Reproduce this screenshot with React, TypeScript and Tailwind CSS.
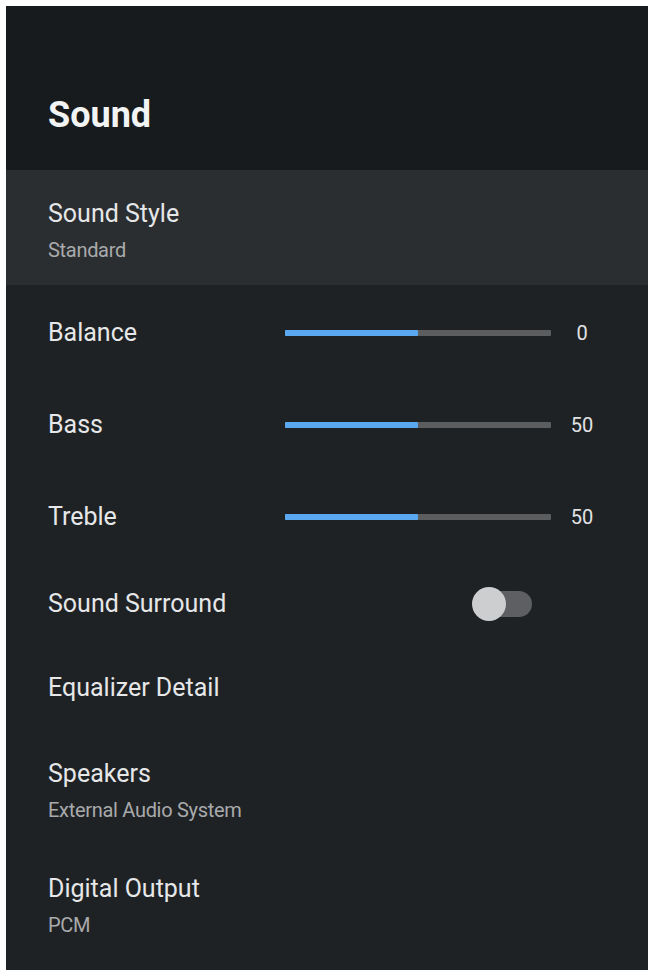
import React from "react";

const font = { fontFamily: "Roboto, 'Noto Sans', sans-serif" };

function Slider({ label, value, pct }: { label: string; value: string; pct: number }) {
  return (
    <div className="flex h-[92px] items-center pl-[42px] pt-[3px]">
      <div className="w-[237px] text-[25px] leading-[30px] text-[#e6e7e8]">{label}</div>
      <div className="relative h-[6px] w-[266px] rounded-[1px] bg-[#5b5d5f]">
        <div className="h-full rounded-[1px] bg-[#5aa8ef]" style={{ width: `${pct}%` }} />
      </div>
      <div className="ml-[9px] w-[44px] text-center text-[20px] leading-[24px] text-[#e2e3e4]">{value}</div>
    </div>
  );
}

function TwoLine({ title, sub, selected }: { title: string; sub: string; selected?: boolean }) {
  return (
    <div className={`h-[115px] pl-[42px] pt-[29px] ${selected ? "bg-[#2b2e31]" : ""}`}>
      <div className="text-[25px] leading-[30px] text-[#e6e7e8]">{title}</div>
      <div className="mt-[9px] text-[20px] leading-[24px] tracking-[-0.3px] text-[#a9aaab]">{sub}</div>
    </div>
  );
}

export default function App() {
  return (
    <div className="min-h-[973px] bg-white pl-[6px] pr-[3px] pt-[6px]" style={font}>
      <div className="h-[964px] w-[642px] overflow-hidden bg-[#1f2225]">
        <div className="h-[164px] bg-[#181b1e] pl-[42px] pt-[88px]">
          <h1 className="text-[36px] font-bold leading-[42px] text-[#f2f3f3]">Sound</h1>
        </div>

        <TwoLine title="Sound Style" sub="Standard" selected />

        <Slider label="Balance" value="0" pct={50} />
        <Slider label="Bass" value="50" pct={50} />
        <Slider label="Treble" value="50" pct={50} />

        <div className="flex h-[82px] items-center pl-[42px] pt-[3px]">
          <div className="w-[424px] text-[25px] leading-[30px] text-[#e6e7e8]">Sound Surround</div>
          <div className="relative h-[36px] w-[60px]">
            <div className="absolute right-0 top-[5px] h-[26px] w-[50px] rounded-full bg-[#5d5f62]" />
            <div className="absolute left-0 top-[1px] h-[34px] w-[34px] rounded-full bg-[#cdcecf]" />
          </div>
        </div>

        <div className="flex h-[87px] items-center pl-[42px] pt-[3px]">
          <div className="text-[25px] leading-[30px] text-[#e6e7e8]">Equalizer Detail</div>
        </div>

        <TwoLine title="Speakers" sub="External Audio System" />
        <TwoLine title="Digital Output" sub="PCM" />
      </div>
    </div>
  );
}
